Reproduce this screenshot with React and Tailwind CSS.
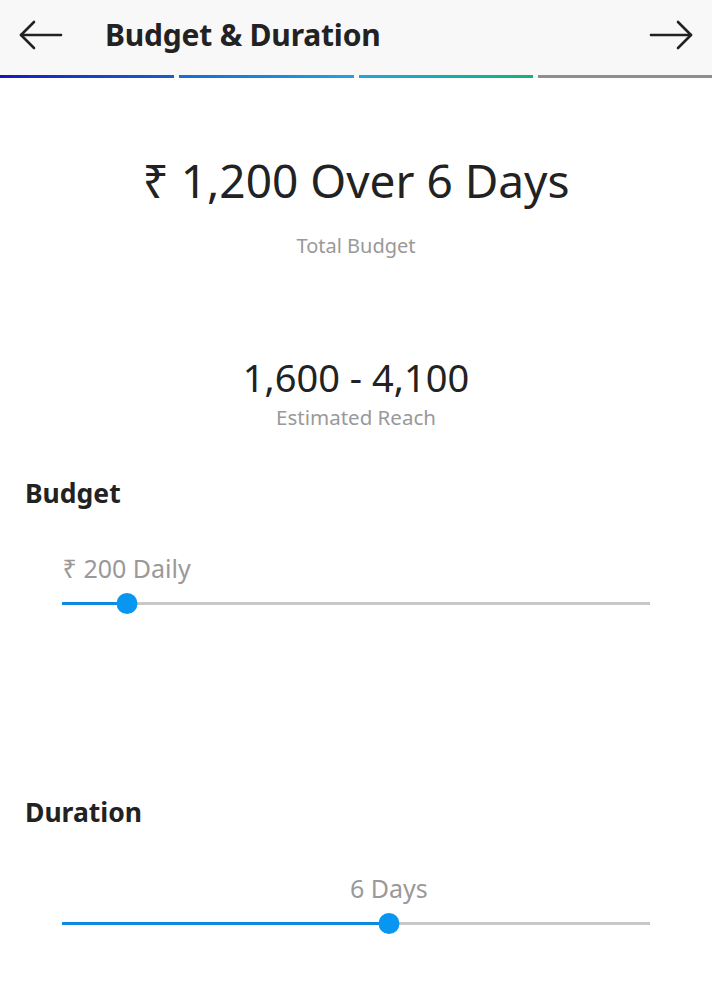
import React from 'react';

const Arrow = ({ dir = 'left' }) => (
  <svg width="44" height="30" viewBox="0 0 44 30" fill="none" stroke="#222" strokeWidth="2.6" strokeLinecap="round" strokeLinejoin="round"
    className={dir === 'right' ? 'rotate-180' : ''}>
    <path d="M2 15H42" />
    <path d="M15 2L2 15L15 28" />
  </svg>
);

const Slider = ({ label, pct }) => (
  <div className="px-[62px]">
    <div className="relative h-[30px]">
      <span
        className="absolute top-0 -translate-x-1/2 whitespace-nowrap text-[25px] leading-[30px] text-[#999]"
        style={{ left: `${pct}%` }}
      >
        {label}
      </span>
    </div>
    <div className="relative mt-[10px] h-[20px]">
      <div className="absolute left-0 right-0 top-[9px] h-[3px] bg-[#c8c8c8]" />
      <div className="absolute left-0 top-[9px] h-[3px] bg-[#0a8ae0]" style={{ width: `${pct}%` }} />
      <div
        className="absolute top-[0px] h-[21px] w-[21px] -translate-x-1/2 rounded-full bg-[#0896f0]"
        style={{ left: `${pct}%` }}
      />
    </div>
  </div>
);

export default function App() {
  return (
    <div className="min-h-[1000px] w-[712px] bg-white font-['Noto_Sans',sans-serif] text-[#222]">
      {/* header */}
      <div className="flex h-[75px] items-center bg-[#f8f8f8] px-[19px] pb-[5px]">
        <Arrow />
        <h1 className="ml-[42px] flex-1 text-[30px] font-bold leading-none tracking-[-0.2px] text-[#222]">Budget &amp; Duration</h1>
        <Arrow dir="right" />
      </div>
      <div className="flex h-[3px] gap-[5px] bg-[#f8f8f8]">
        <div className="flex-1 bg-gradient-to-r from-[#1a10c0] to-[#1a5cd2]" />
        <div className="flex-1 bg-gradient-to-r from-[#1a6ad6] to-[#1ea4e0]" />
        <div className="flex-1 bg-gradient-to-r from-[#20a6dc] to-[#12b47a]" />
        <div className="flex-1 bg-[#8e8e8e]" />
      </div>

      {/* totals */}
      <div className="mt-[77px] text-center">
        <div className="text-[46px] leading-[50px] text-[#222]">₹ 1,200 Over 6 Days</div>
        <div className="mt-[29px] text-[20px] leading-[24px] text-[#999]">Total Budget</div>
        <div className="mt-[97px] text-[38px] leading-[44px] text-[#222]">1,600 - 4,100</div>
        <div className="mt-[6px] text-[20.5px] leading-[24px] text-[#999]">Estimated Reach</div>
      </div>

      {/* budget */}
      <h2 className="mt-[48px] px-[25px] text-[26.5px] font-bold leading-[32px]">Budget</h2>
      <div className="mt-[44px]">
        <Slider label="₹ 200 Daily" pct={11} />
      </div>

      {/* duration */}
      <h2 className="mt-[183px] px-[25px] text-[26.5px] font-bold leading-[32px]">Duration</h2>
      <div className="mt-[45px]">
        <Slider label="6 Days" pct={55.6} />
      </div>
    </div>
  );
}
